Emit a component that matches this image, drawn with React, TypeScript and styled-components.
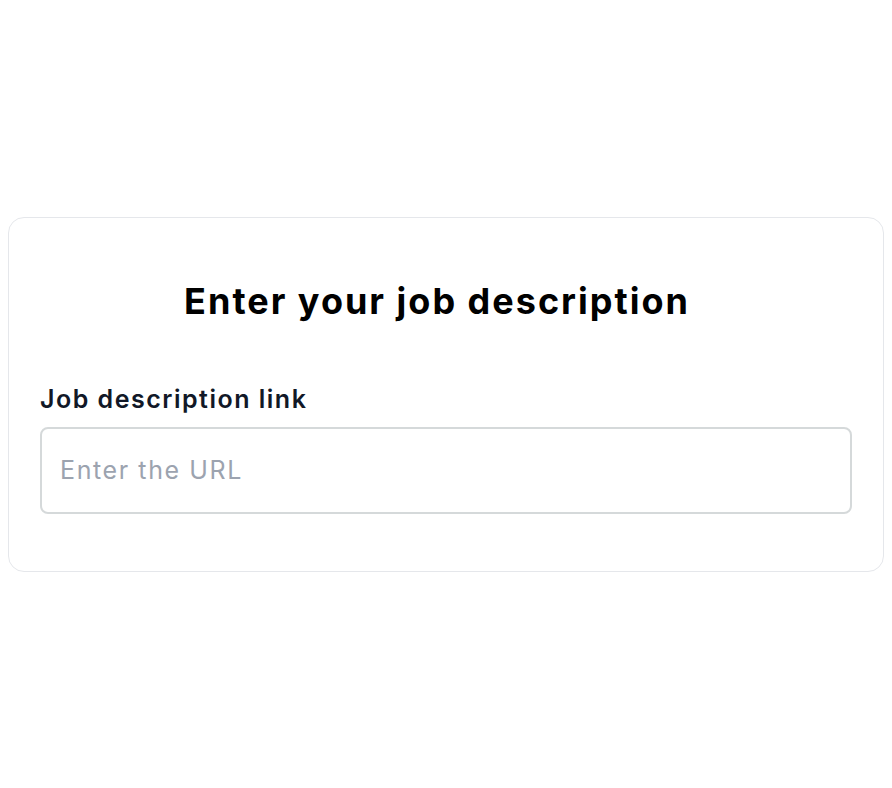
import * as React from 'react';
import styled, { createGlobalStyle } from 'styled-components';

const GlobalStyle = createGlobalStyle`
	body {
		margin: 8px;
		background: #ffffff;
		font-family: Inter, "Noto Sans", sans-serif;
	}
	* {
		box-sizing: border-box;
	}
`;

const Page = styled.div`
	min-height: calc(100vh - 16px);
	display: flex;
	align-items: center;
`;

const Card = styled.div`
	width: 100%;
	background: #ffffff;
	border: 1px solid #e5e7eb;
	border-radius: 16px;
	padding: 61px 31px 57px;
	display: flex;
	flex-direction: column;
`;

const Title = styled.h1`
	margin: 0 18px 0 0;
	text-align: center;
	font-size: 36px;
	line-height: 44px;
	font-weight: 700;
	letter-spacing: 2px;
	color: #000000;
`;

const Label = styled.label`
	margin-top: 60px;
	margin-bottom: 12px;
	font-size: 25px;
	line-height: 32px;
	font-weight: 600;
	letter-spacing: 1.5px;
	color: #111827;
`;

const Input = styled.input`
	width: 100%;
	height: 87px;
	border: 2px solid #d5d9da;
	border-radius: 8px;
	padding: 0 18px;
	font-family: Inter, "Noto Sans", sans-serif;
	font-size: 25px;
	letter-spacing: 1.6px;
	color: #111827;
	outline: none;
	&::placeholder {
		color: #9ca3af;
	}
`;

export default function App() {
	return (
		<>
			<GlobalStyle />
			<Page>
				<Card>
					<Title>Enter your job description</Title>
					<Label htmlFor="jd-link">Job description link</Label>
					<Input id="jd-link" type="text" placeholder="Enter the URL" />
				</Card>
			</Page>
		</>
	);
}
